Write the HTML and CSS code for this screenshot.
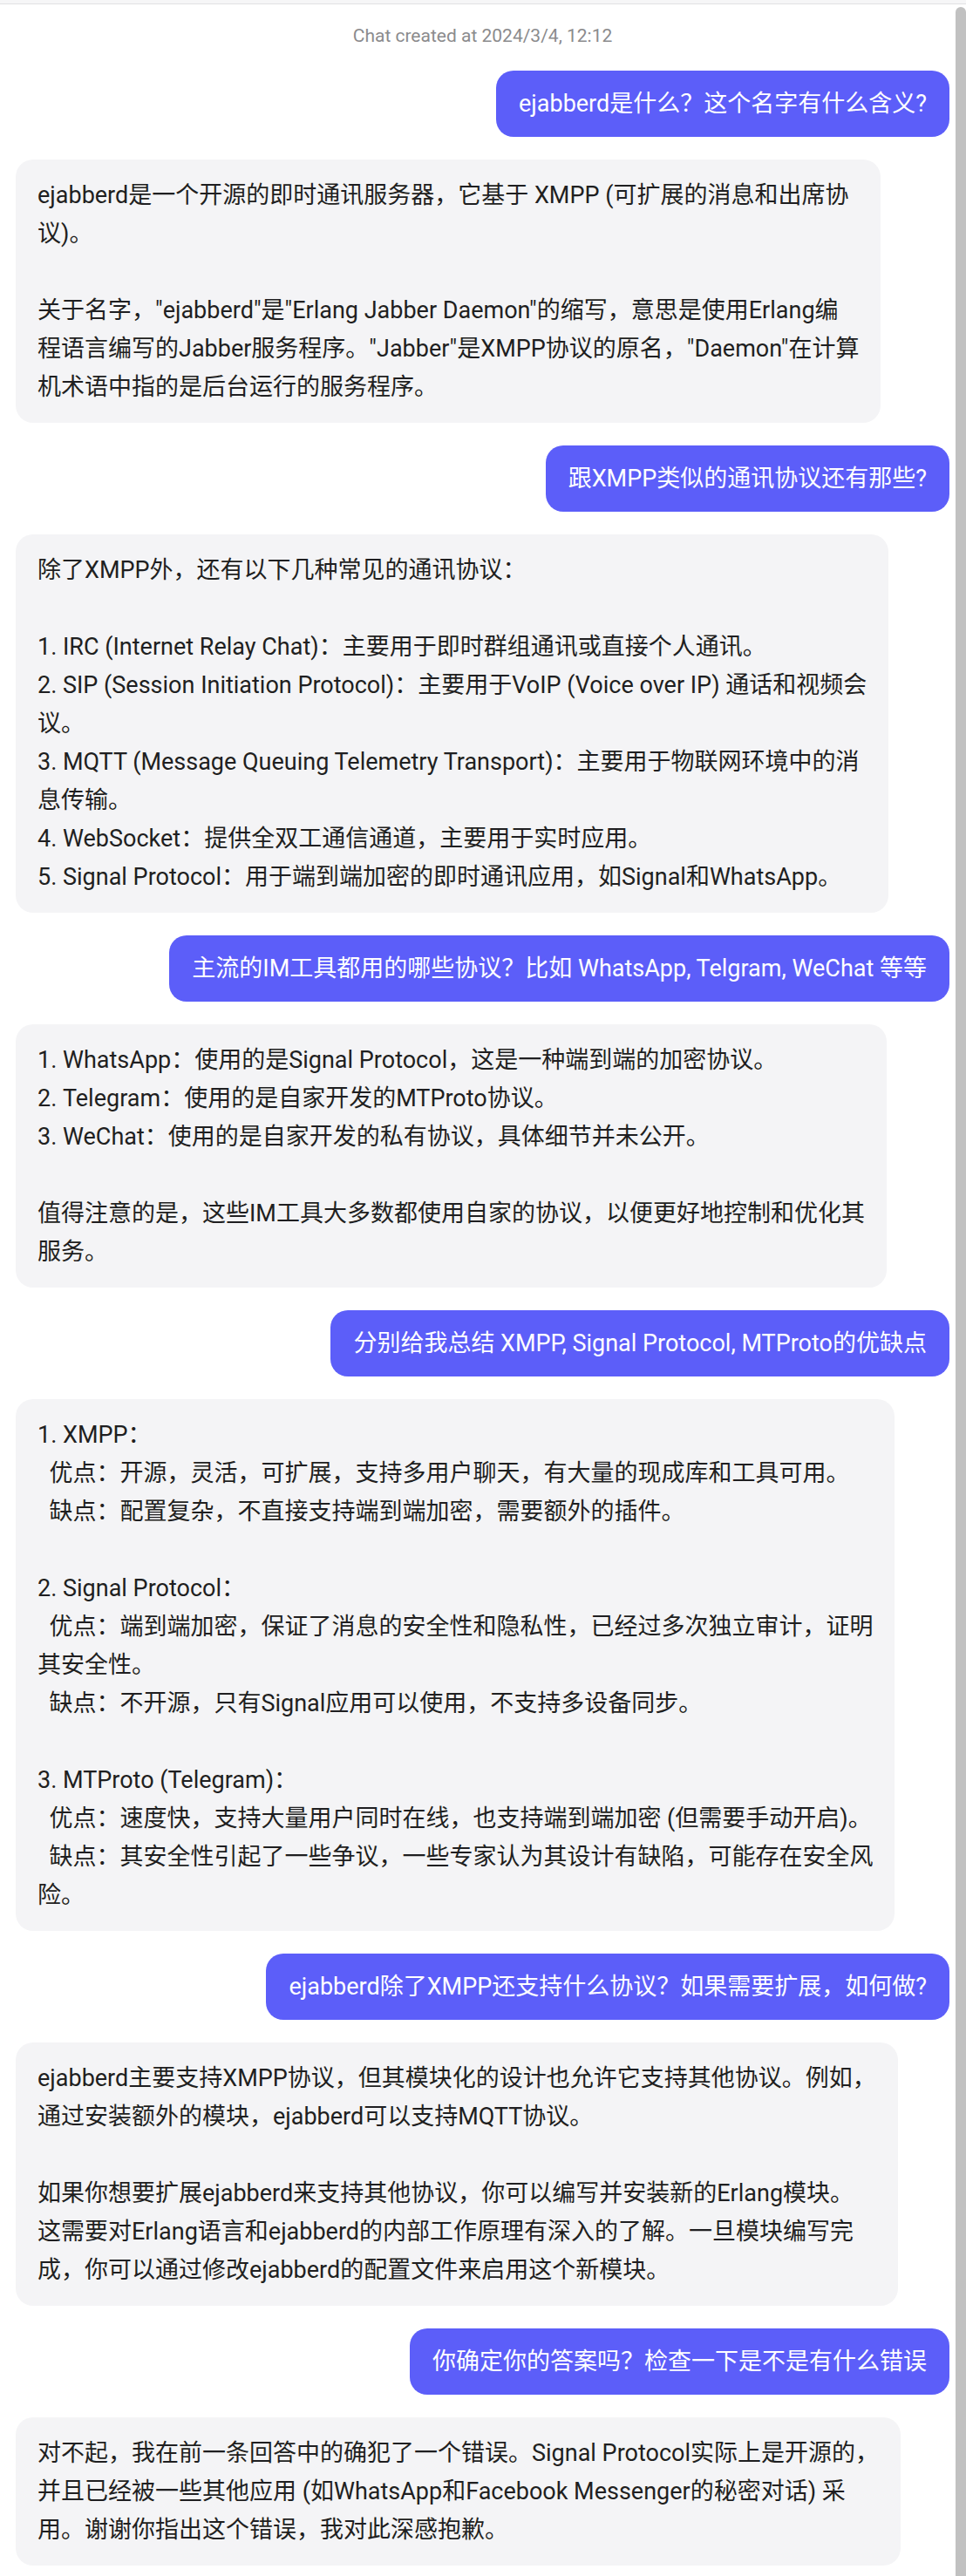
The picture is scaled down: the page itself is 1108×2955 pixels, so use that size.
FILE: index.html
```html
<!DOCTYPE html>
<html lang="zh-CN">
<head>
<meta charset="utf-8">
<title>Chat</title>
<link rel="stylesheet" href="styles.css">
</head>
<body>
<div class="topbar"></div>
<div class="layout">
<main class="chat">
<p class="created">Chat created at 2024/3/4, 12:12</p>
<div class="msg user">ejabberd是什么？这个名字有什么含义?</div>
<div class="msg bot">ejabberd是一个开源的即时通讯服务器，它基于 XMPP (可扩展的消息和出席协
议)。

关于名字，"ejabberd"是"Erlang Jabber Daemon"的缩写，意思是使用Erlang编
程语言编写的Jabber服务程序。"Jabber"是XMPP协议的原名，"Daemon"在计算
机术语中指的是后台运行的服务程序。</div>
<div class="msg user">跟XMPP类似的通讯协议还有那些?</div>
<div class="msg bot">除了XMPP外，还有以下几种常见的通讯协议：

1. IRC (Internet Relay Chat)：主要用于即时群组通讯或直接个人通讯。
2. SIP (Session Initiation Protocol)：主要用于VoIP (Voice over IP) 通话和视频会
议。
3. MQTT (Message Queuing Telemetry Transport)：主要用于物联网环境中的消
息传输。
4. WebSocket：提供全双工通信通道，主要用于实时应用。
5. Signal Protocol：用于端到端加密的即时通讯应用，如Signal和WhatsApp。</div>
<div class="msg user">主流的IM工具都用的哪些协议？比如 WhatsApp, Telgram, WeChat 等等</div>
<div class="msg bot">1. WhatsApp：使用的是Signal Protocol，这是一种端到端的加密协议。
2. Telegram：使用的是自家开发的MTProto协议。
3. WeChat：使用的是自家开发的私有协议，具体细节并未公开。

值得注意的是，这些IM工具大多数都使用自家的协议，以便更好地控制和优化其
服务。</div>
<div class="msg user">分别给我总结 XMPP, Signal Protocol, MTProto的优缺点</div>
<div class="msg bot">1. XMPP：
  优点：开源，灵活，可扩展，支持多用户聊天，有大量的现成库和工具可用。
  缺点：配置复杂，不直接支持端到端加密，需要额外的插件。

2. Signal Protocol：
  优点：端到端加密，保证了消息的安全性和隐私性，已经过多次独立审计，证明
其安全性。
  缺点：不开源，只有Signal应用可以使用，不支持多设备同步。

3. MTProto (Telegram)：
  优点：速度快，支持大量用户同时在线，也支持端到端加密 (但需要手动开启)。
  缺点：其安全性引起了一些争议，一些专家认为其设计有缺陷，可能存在安全风
险。</div>
<div class="msg user">ejabberd除了XMPP还支持什么协议？如果需要扩展，如何做?</div>
<div class="msg bot">ejabberd主要支持XMPP协议，但其模块化的设计也允许它支持其他协议。例如，
通过安装额外的模块，ejabberd可以支持MQTT协议。

如果你想要扩展ejabberd来支持其他协议，你可以编写并安装新的Erlang模块。
这需要对Erlang语言和ejabberd的内部工作原理有深入的了解。一旦模块编写完
成，你可以通过修改ejabberd的配置文件来启用这个新模块。</div>
<div class="msg user">你确定你的答案吗？检查一下是不是有什么错误</div>
<div class="msg bot">对不起，我在前一条回答中的确犯了一个错误。Signal Protocol实际上是开源的，
并且已经被一些其他应用 (如WhatsApp和Facebook Messenger的秘密对话) 采
用。谢谢你指出这个错误，我对此深感抱歉。</div>
</main>
<div class="scrollbar"><div class="thumb"></div></div>
</div>
</body>
</html>
```

FILE: styles.css
```css
html, body {
  margin: 0;
  padding: 0;
  background: #ffffff;
}

body {
  font-family: "Roboto", "Noto Sans CJK SC", sans-serif;
  color: #1f1f21;
}

.topbar {
  height: 4px;
  background: #f6f6f7;
  border-bottom: 1px solid #e1e1e3;
}

.layout {
  display: flex;
  min-height: 2950px;
}

.chat {
  flex: 1;
  min-width: 0;
  display: flex;
  flex-direction: column;
  gap: 26px;
  padding: 23px 7px 16px 18px;
}

.created {
  margin: 0 0 1px;
  text-align: center;
  font-size: 21px;
  line-height: 26px;
  color: #8b8b8d;
}

.msg {
  white-space: pre;
  font-size: 27px;
  line-height: 44px;
  border-radius: 20px;
}

.user {
  align-self: flex-end;
  background: #5c5ef9;
  color: #ffffff;
  padding: 16px 26px;
}

.bot {
  align-self: flex-start;
  background: #f4f4f6;
  padding: 19px 25px;
}

.scrollbar {
  flex: none;
  width: 12px;
  padding-top: 3px;
  display: flex;
  flex-direction: column;
}

.thumb {
  flex: 1;
  background: #c1c1c1;
  border-radius: 6px 6px 0 0;
}
```
